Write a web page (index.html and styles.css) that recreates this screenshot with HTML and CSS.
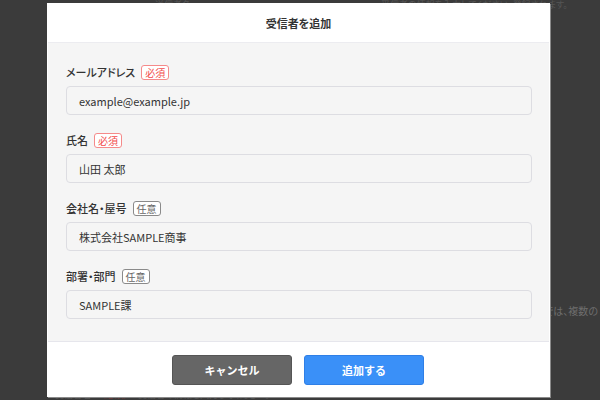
FILE: index.html
```html
<!DOCTYPE html>
<html lang="ja">
<head>
<meta charset="utf-8">
<link rel="stylesheet" href="styles.css">
</head>
<body>
<div class="page">
  <div class="bg-row bg-top"><span class="bg-a">送信者名</span><span class="bg-b">受信者の情報を入力してください。登録されます。</span></div>
  <div class="bg-row bg-mid"><span class="bg-c">オプションでは、複数の</span></div>
  <div class="bg-row bg-bot"><span class="bg-a">受信者名</span><span class="bg-d">（必須）</span><span class="bg-b">受信者の情報を入力してください。</span></div>
</div>
<div class="overlay">
  <div class="modal">
    <div class="modal-header">受信者を追加</div>
    <div class="modal-body">
      <div class="field">
        <div class="label">メールアドレス<span class="badge req">必須</span></div>
        <div class="input">example@example.jp</div>
      </div>
      <div class="field">
        <div class="label">氏名<span class="badge req">必須</span></div>
        <div class="input">山田 太郎</div>
      </div>
      <div class="field">
        <div class="label">会社名・屋号<span class="badge opt">任意</span></div>
        <div class="input">株式会社SAMPLE商事</div>
      </div>
      <div class="field">
        <div class="label">部署・部門<span class="badge opt">任意</span></div>
        <div class="input">SAMPLE課</div>
      </div>
    </div>
    <div class="modal-footer">
      <button class="btn btn-cancel">キャンセル</button>
      <button class="btn btn-add">追加する</button>
    </div>
  </div>
</div>
</body>
</html>
```
FILE: styles.css
```css
* { box-sizing: border-box; }
html, body { margin: 0; padding: 0; }
body {
  width: 600px;
  height: 400px;
  overflow: hidden;
  background: #3b3b3b;
  font-family: "Noto Sans CJK JP", "Noto Sans", sans-serif;
  font-feature-settings: "palt";
  position: relative;
}
.page {
  height: 400px;
  display: flex;
  flex-direction: column;
  color: #555;
  font-size: 9px;
  line-height: 10px;
}
.bg-row { display: flex; white-space: nowrap; }
.bg-top { margin-top: 0; padding-left: 155px; gap: 190px; }
.bg-mid { justify-content: flex-end; padding-right: 2px; color: #6e6e6e; margin-top: 296px; font-size: 10px; }
.bg-bot { padding-left: 55px; gap: 10px; margin-top: auto; }
.bg-d { color: #6a3a3a; }

.overlay {
  position: absolute;
  left: 47px;
  top: 3px;
}
.modal {
  width: 503px;
  height: 394px;
  background: #fff;
  box-shadow: 1px 1px 0 #8a8a8a;
  display: flex;
  flex-direction: column;
}
.modal-header {
  height: 39px;
  display: flex;
  align-items: center;
  justify-content: center;
  font-size: 11px;
  font-weight: 700;
  color: #333;
}
.modal-body {
  margin: 0 1px;
  height: 300px;
  background: #f5f5f5;
  border-top: 1px solid #ececf0;
  border-bottom: 1px solid #e6e6ec;
  padding: 22px 17px 0 17px;
  display: flex;
  flex-direction: column;
  gap: 18px;
}
.field {
  display: flex;
  flex-direction: column;
  gap: 6px;
}
.label {
  font-size: 11px;
  font-weight: 500;
  color: #333;
  display: flex;
  align-items: center;
  height: 15px;
  line-height: 15px;
  padding-left: 1px;
}
.badge {
  margin-left: 6px;
  font-size: 10px;
  font-weight: 400;
  line-height: 12px;
  height: 15px;
  padding: 0 3px;
  border-radius: 3px;
  border: 1px solid;
  display: flex;
  align-items: center;
}
.req { color: #f24c4c; border-color: #f58a8a; background: #fff; }
.opt { color: #666; border-color: #8a8a8a; background: #fff; }
.input {
  height: 29px;
  margin-left: 1px;
  border: 1px solid #dddde2;
  border-radius: 4px;
  background: #f5f5f5;
  display: flex;
  align-items: center;
  padding-left: 12px;
  font-size: 11px;
  color: #333;
}
.modal-footer {
  flex: 1;
  display: flex;
  justify-content: center;
  align-items: center;
  gap: 12px;
  padding-right: 1px;
}
.btn {
  width: 120px;
  height: 30px;
  border-radius: 3px;
  font-family: inherit;
  font-size: 11px;
  font-weight: 700;
  color: #fff;
  padding: 0;
}
.btn-cancel { background: #666; border: 1px solid #555; }
.btn-add { background: #3a90f8; border: 1px solid #2f7fe6; }
```
